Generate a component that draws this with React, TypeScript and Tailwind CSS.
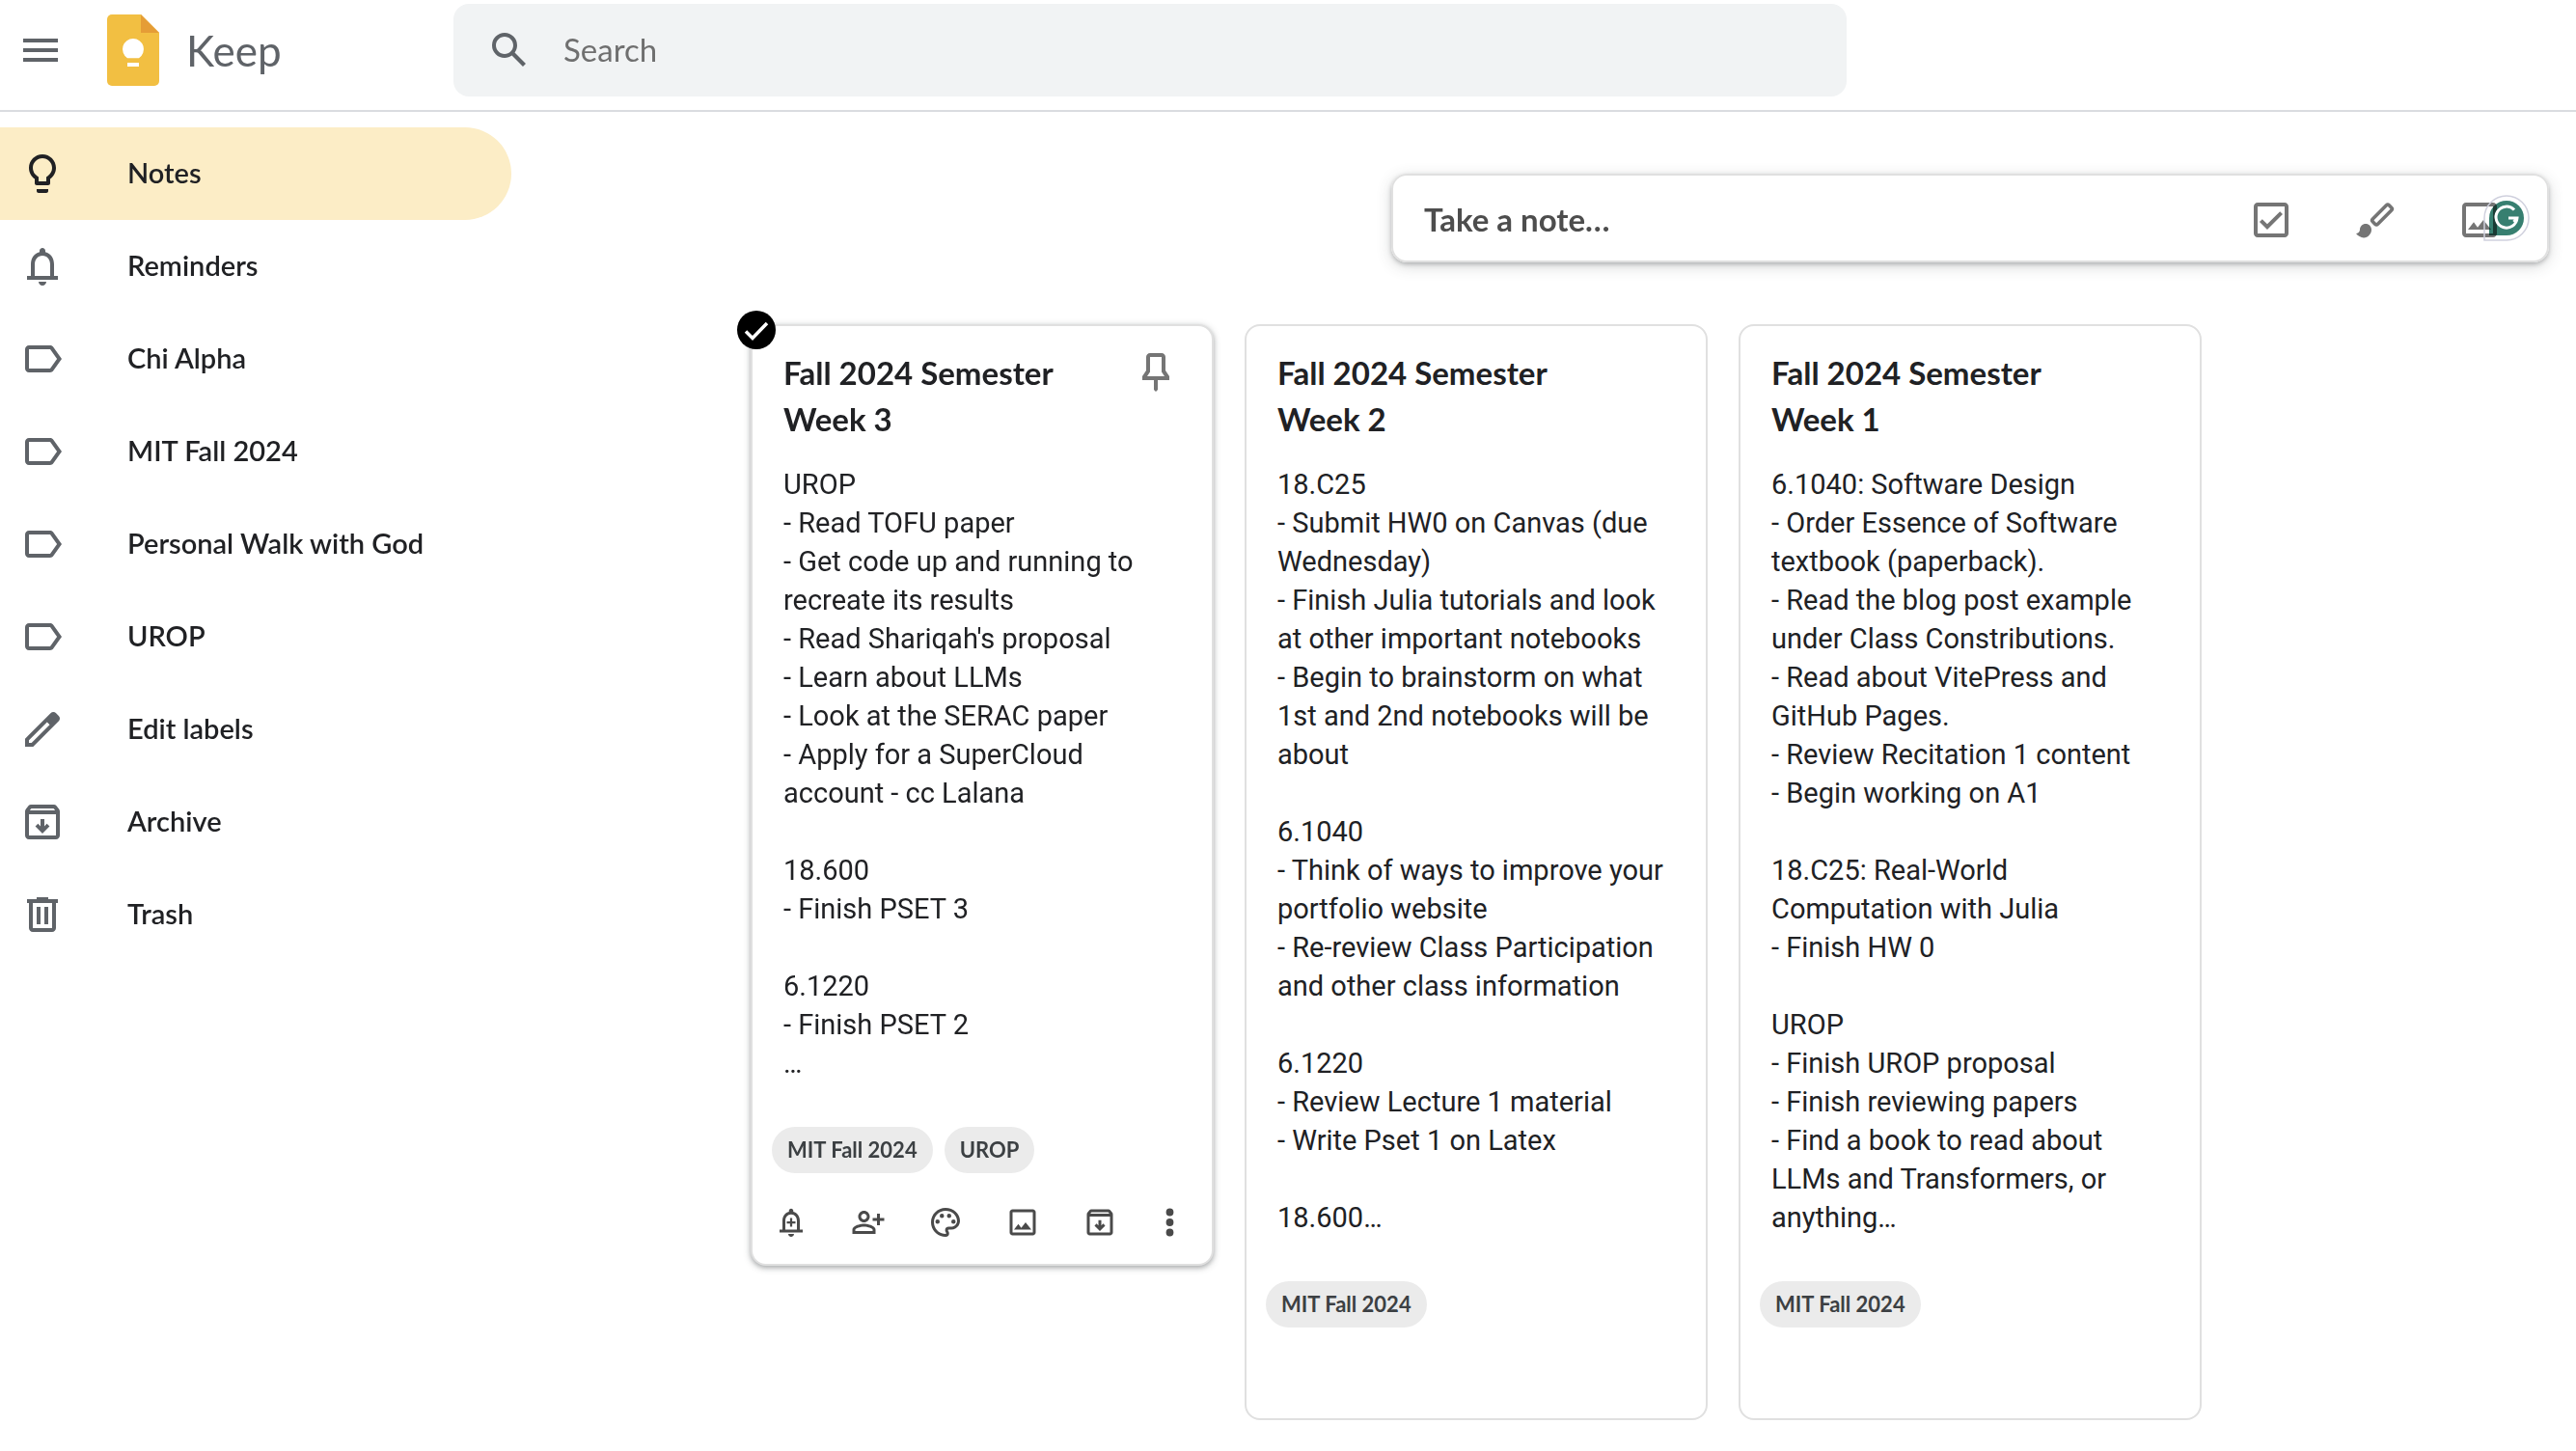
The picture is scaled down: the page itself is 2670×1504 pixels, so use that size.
import React from "react";

type IconProps = { d: string; className?: string; viewBox?: string };

const Icon = ({ d, className = "size-12", viewBox = "0 0 24 24" }: IconProps) => (
  <svg viewBox={viewBox} fill="currentColor" aria-hidden="true" className={`block shrink-0 ${className}`}>
    <path fillRule="evenodd" d={d} />
  </svg>
);

const paths = {
  menu: "M3 18h18v-2H3v2zm0-5h18v-2H3v2zm0-7v2h18V6H3z",
  search:
    "M20.49 19l-5.73-5.73C15.53 12.2 16 10.91 16 9.5A6.5 6.5 0 1 0 9.5 16c1.41 0 2.7-.47 3.77-1.24L19 20.49 20.49 19zM5 9.5C5 7.01 7.01 5 9.5 5S14 7.01 14 9.5 11.99 14 9.5 14 5 11.99 5 9.5z",
  bulb: "M9 21c0 .55.45 1 1 1h4c.55 0 1-.45 1-1v-1H9v1zM12 2C8.14 2 5 5.14 5 9c0 2.38 1.19 4.47 3 5.74V17c0 .55.45 1 1 1h6c.55 0 1-.45 1-1v-2.26c1.81-1.27 3-3.36 3-5.74 0-3.86-3.14-7-7-7zm2.85 11.1l-.85.6V16h-4v-2.3l-.85-.6A4.997 4.997 0 0 1 7 9c0-2.76 2.24-5 5-5s5 2.24 5 5c0 1.63-.8 3.16-2.15 4.1z",
  bell: "M18 17v-6c0-3.07-1.63-5.64-4.5-6.32V4c0-.83-.67-1.5-1.5-1.5s-1.5.67-1.5 1.5v.68C7.64 5.36 6 7.92 6 11v6H4v2h16v-2h-2zm-2 0H8v-6c0-2.48 1.51-4.5 4-4.5s4 2.02 4 4.5v6zm-4 5c1.1 0 2-.9 2-2h-4c0 1.1.9 2 2 2z",
  label:
    "M17.63 5.84C17.27 5.33 16.67 5 16 5L5 5.01C3.9 5.01 3 5.9 3 7v10c0 1.1.9 1.99 2 1.99L16 19c.67 0 1.27-.33 1.63-.84L22 12l-4.37-6.16zM16 17H5V7h11l3.55 5L16 17z",
  pencil:
    "M20.41 4.94l-1.35-1.35c-.78-.78-2.05-.78-2.83 0L3 16.82V21h4.18L20.41 7.77c.79-.78.79-2.05 0-2.83zM6.35 19H5v-1.35l9.4-9.4 1.35 1.35L6.35 19z",
  archive:
    "M20.54 5.23l-1.39-1.68C18.88 3.21 18.47 3 18 3H6c-.47 0-.88.21-1.16.55L3.46 5.23C3.17 5.57 3 6.02 3 6.5V19c0 1.1.9 2 2 2h14c1.1 0 2-.9 2-2V6.5c0-.48-.17-.93-.46-1.27zM6.24 5h11.52l.83 1H5.42l.82-1zM5 19V8h14v11H5zM11 10.5v3.7l-1.3-1.3-1.4 1.4L12 18l3.7-3.7-1.4-1.4-1.3 1.3v-3.7z",
  trash:
    "M15 4V3H9v1H4v2h1v13c0 1.1.9 2 2 2h10c1.1 0 2-.9 2-2V6h1V4h-5zm2 15H7V6h10v13zM9 8h2v9H9V8zm4 0h2v9h-2V8z",
  checkbox:
    "M19 3H5c-1.1 0-2 .9-2 2v14c0 1.1.9 2 2 2h14c1.1 0 2-.9 2-2V5c0-1.1-.9-2-2-2zm0 16H5V5h14v14zM17.99 9l-1.41-1.42-6.59 6.59-2.58-2.57-1.42 1.41 4 3.99z",
  image:
    "M19 5v14H5V5h14m0-2H5c-1.1 0-2 .9-2 2v14c0 1.1.9 2 2 2h14c1.1 0 2-.9 2-2V5c0-1.1-.9-2-2-2zM14 12l-3 3.87L9 13.14 6 17h12l-4-5z",
  pin: "M17 4v7l2 3v2h-6v5l-1 1-1-1v-5H5v-2l2-3V4c0-1.1.9-2 2-2h6c1.1 0 2 .89 2 2zM9 4v7.75L7.5 14h9L15 11.75V4H9z",
  bellPlus:
    "M18 17v-6c0-3.07-1.63-5.64-4.5-6.32V4c0-.83-.67-1.5-1.5-1.5s-1.5.67-1.5 1.5v.68C7.64 5.36 6 7.92 6 11v6H4v2h16v-2h-2zm-2 0H8v-6c0-2.48 1.51-4.5 4-4.5s4 2.02 4 4.5v6zm-4 5c1.1 0 2-.9 2-2h-4c0 1.1.9 2 2 2zM11.25 9h1.5v2.25H15v1.5h-2.25V15h-1.5v-2.25H9v-1.5h2.25z",
  personAdd:
    "M9 12c2.21 0 4-1.79 4-4s-1.79-4-4-4-4 1.79-4 4 1.79 4 4 4zm0-6c1.1 0 2 .9 2 2s-.9 2-2 2-2-.9-2-2 .9-2 2-2zM9 13c-2.67 0-8 1.34-8 4v3h16v-3c0-2.66-5.33-4-8-4zm6 5H3v-.99C3.2 16.29 6.3 15 9 15s5.8 1.29 6 2v1zM20 9V6h-2v3h-3v2h3v3h2v-3h3V9z",
  palette:
    "M12 22C6.49 22 2 17.51 2 12S6.49 2 12 2s10 4.04 10 9c0 3.31-2.69 6-6 6h-1.77c-.28 0-.5.22-.5.5 0 .12.05.23.13.33.41.47.64 1.06.64 1.67A2.5 2.5 0 0 1 12 22zm0-18c-4.41 0-8 3.59-8 8s3.59 8 8 8c.28 0 .5-.22.5-.5a.54.54 0 0 0-.14-.35c-.41-.46-.63-1.05-.63-1.65a2.5 2.5 0 0 1 2.5-2.5H16c2.21 0 4-1.79 4-4 0-3.86-3.59-7-8-7zM6.5 10a1.5 1.5 0 1 0 0 3 1.5 1.5 0 0 0 0-3zM9.5 6a1.5 1.5 0 1 0 0 3 1.5 1.5 0 0 0 0-3zM14.5 6a1.5 1.5 0 1 0 0 3 1.5 1.5 0 0 0 0-3zM17.5 10a1.5 1.5 0 1 0 0 3 1.5 1.5 0 0 0 0-3z",
  more: "M12 2.4a2.6 2.6 0 1 0 0 5.2 2.6 2.6 0 0 0 0-5.2zM12 9.4a2.6 2.6 0 1 0 0 5.2 2.6 2.6 0 0 0 0-5.2zM12 16.4a2.6 2.6 0 1 0 0 5.2 2.6 2.6 0 0 0 0-5.2z",
};

const navItems = [
  { name: "Notes", icon: paths.bulb, active: true },
  { name: "Reminders", icon: paths.bell },
  { name: "Chi Alpha", icon: paths.label },
  { name: "MIT Fall 2024", icon: paths.label },
  { name: "Personal Walk with God", icon: paths.label },
  { name: "UROP", icon: paths.label },
  { name: "Edit labels", icon: paths.pencil },
  { name: "Archive", icon: paths.archive },
  { name: "Trash", icon: paths.trash },
];

const noteActions = [
  { name: "Remind me", icon: paths.bellPlus },
  { name: "Collaborator", icon: paths.personAdd },
  { name: "Background options", icon: paths.palette },
  { name: "Add image", icon: paths.image },
  { name: "Archive", icon: paths.archive },
];

type Note = { title: string; labels: string[]; body: string; selected?: boolean };

const notes: Note[] = [
  {
    title: "Fall 2024 Semester Week 3",
    selected: true,
    labels: ["MIT Fall 2024", "UROP"],
    body: `UROP
- Read TOFU paper
- Get code up and running to recreate its results
- Read Shariqah's proposal
- Learn about LLMs
- Look at the SERAC paper
- Apply for a SuperCloud account - cc Lalana

18.600
- Finish PSET 3

6.1220
- Finish PSET 2
…`,
  },
  {
    title: "Fall 2024 Semester Week 2",
    labels: ["MIT Fall 2024"],
    body: `18.C25
- Submit HW0 on Canvas (due Wednesday)
- Finish Julia tutorials and look at other important notebooks
- Begin to brainstorm on what 1st and 2nd notebooks will be about

6.1040
- Think of ways to improve your portfolio website
- Re-review Class Participation and other class information

6.1220
- Review Lecture 1 material
- Write Pset 1 on Latex

18.600…`,
  },
  {
    title: "Fall 2024 Semester Week 1",
    labels: ["MIT Fall 2024"],
    body: `6.1040: Software Design
- Order Essence of Software textbook (paperback).
- Read the blog post example under Class Constributions.
- Read about VitePress and GitHub Pages.
- Review Recitation 1 content
- Begin working on A1

18.C25: Real-World Computation with Julia
- Finish HW 0

UROP
- Finish UROP proposal
- Finish reviewing papers
- Find a book to read about LLMs and Transformers, or anything…`,
  },
];

const KeepLogo = () => (
  <svg viewBox="0 0 54 74" aria-hidden="true" className="h-[74px] w-[54px] shrink-0">
    <path d="M5 0h30l19 19v50a5 5 0 0 1-5 5H5a5 5 0 0 1-5-5V5a5 5 0 0 1 5-5z" fill="#f2bf42" />
    <path d="M35 0l19 19H35z" fill="#e59d36" />
    <path d="M27 25a11 11 0 0 0-6 20.2h12A11 11 0 0 0 27 25z" fill="#fff" />
    <path d="M21 50h12v4H21z" fill="#fff" />
  </svg>
);

const BrushIcon = () => (
  <svg viewBox="0 0 24 24" aria-hidden="true" className="block size-12">
    <path
      d="M7 14c-1.66 0-3 1.34-3 3 0 1.31-1.16 2-2 2 .92 1.22 2.49 2.2 4 2.2 2.21 0 4-1.99 4-4.2 0-1.66-1.34-3-3-3z"
      fill="currentColor"
    />
    <rect
      x="9.5"
      y="7.4"
      width="12"
      height="3.7"
      rx="1"
      transform="rotate(-45 15.5 9.25)"
      fill="none"
      stroke="currentColor"
      strokeWidth="1.8"
    />
  </svg>
);

const GrammarlyBadge = () => (
  <svg viewBox="0 0 48 48" aria-hidden="true" className="block size-12">
    <path d="M1 47V24a23 23 0 1 1 23 23z" fill="none" stroke="#d0d1de" strokeWidth="1.5" />
    <path d="M6 42V24a18 18 0 1 1 18 18z" fill="#377f70" className="mix-blend-multiply" />
    <path d="M32 15.5A11 11 0 1 0 35 24H26M35 24l-3.5 4" fill="none" stroke="#fff" strokeWidth="3" />
  </svg>
);

const Header = () => (
  <header className="flex h-[116px] items-start border-b-2 border-[#dadce0] pt-1">
    <div className="flex h-24 w-[470px] shrink-0 items-center pl-[18px] text-[#5f6368]">
      <button type="button" aria-label="Main menu">
        <Icon d={paths.menu} />
      </button>
      <a href="#home" className="ml-[45px] flex items-center gap-7">
        <KeepLogo />
        <span className="text-[44px]">Keep</span>
      </a>
    </div>
    <form role="search" className="flex h-24 w-[1444px] items-center gap-8 rounded-2xl bg-[#f1f3f4] px-[34px]">
      <button type="button" aria-label="Search" className="text-[#5f6368]">
        <Icon d={paths.search} />
      </button>
      <input
        type="text"
        aria-label="Search"
        placeholder="Search"
        className="min-w-0 flex-1 bg-transparent text-[33px] outline-none placeholder:text-[#6f6f6f]"
      />
    </form>
  </header>
);

const Sidebar = () => (
  <nav className="w-[530px] shrink-0">
    {navItems.map((item) => (
      <a
        key={item.name}
        href="#nav"
        className={`flex h-24 items-center gap-16 rounded-r-full pl-5 ${
          item.active ? "bg-[#fcedc6] text-[#202124]" : "text-[#5f6368]"
        }`}
      >
        <Icon d={item.icon} />
        <span className="pb-0.5 text-[29px] font-semibold text-[#202124]">{item.name}</span>
      </a>
    ))}
  </nav>
);

const TakeNote = () => (
  <div className="mr-7 flex h-[92px] w-[1200px] items-center self-end rounded-2xl border-2 border-[#e0e0e0] pl-8 pr-[46px] pt-1 text-[#757575] shadow-[0_2px_4px_rgba(60,64,67,0.3),0_4px_16px_rgba(60,64,67,0.2)]">
    <input
      type="text"
      aria-label="Take a note"
      placeholder="Take a note…"
      className="min-w-0 flex-1 bg-transparent text-[33px] font-bold outline-none placeholder:text-[#4d4d4d]"
    />
    <div className="flex gap-[60px]">
      <button type="button" aria-label="New list">
        <Icon d={paths.checkbox} />
      </button>
      <button type="button" aria-label="New note with drawing">
        <BrushIcon />
      </button>
      <div className="relative">
        <button type="button" aria-label="New note with image" className="block">
          <Icon d={paths.image} />
        </button>
        <button type="button" aria-label="Grammarly" className="absolute left-7 -top-0.5">
          <GrammarlyBadge />
        </button>
      </div>
    </div>
  </div>
);

const NoteCard = ({ note }: { note: Note }) => (
  <article
    className={`relative w-[480px] rounded-2xl border-2 border-[#e0e0e0] bg-white ${
      note.selected ? "shadow-[0_2px_4px_rgba(60,64,67,0.3),0_2px_6px_2px_rgba(60,64,67,0.15)]" : ""
    }`}
  >
    {note.selected && (
      <button type="button" aria-label="Deselect note" className="absolute -left-4 -top-4 size-10 rounded-full bg-black text-white">
        <svg viewBox="0 0 40 40" aria-hidden="true" className="block size-10">
          <path d="M9 21.5l7 7L31 13" fill="none" stroke="currentColor" strokeWidth="3.5" />
        </svg>
      </button>
    )}
    <div className="flex items-start justify-between pl-8 pr-[34px] pt-6">
      <h2 className="w-[320px] text-[33px] font-bold leading-[48px]">{note.title}</h2>
      {note.selected && (
        <button type="button" aria-label="Pin note" className="text-[#757575]">
          <Icon d={paths.pin} />
        </button>
      )}
    </div>
    <p className="whitespace-pre-line px-8 pt-6 font-[Roboto,sans-serif] text-[29px] leading-10">{note.body}</p>
    <div className="flex gap-3 px-5 pt-[46px]">
      {note.labels.map((label) => (
        <a
          key={label}
          href="#label"
          className="flex h-12 items-center rounded-full bg-[#ebebeb] px-4 pb-0.5 text-[22px] font-bold text-[#3c4043]"
        >
          {label}
        </a>
      ))}
    </div>
    <div className="flex h-[94px] items-center gap-11 pl-[22px] pt-2 text-[#4a4a4a]">
      {note.selected && (
        <>
          {noteActions.map((action) => (
            <button key={action.name} type="button" aria-label={action.name}>
              <Icon d={action.icon} className="size-9" />
            </button>
          ))}
          <button type="button" aria-label="More">
            <Icon d={paths.more} viewBox="5 0 14 24" className="h-9 w-[21px]" />
          </button>
        </>
      )}
    </div>
  </article>
);

export default function App() {
  return (
    <div className="min-h-screen bg-white font-[Lato,sans-serif] text-[#202124]">
      <Header />
      <div className="flex pt-4">
        <Sidebar />
        <main className="flex min-w-0 flex-1 flex-col pt-12">
          <TakeNote />
          <div className="mt-16 flex items-start gap-8 self-center pr-[140px]">
            {notes.map((note) => (
              <NoteCard key={note.title} note={note} />
            ))}
          </div>
        </main>
      </div>
    </div>
  );
}
